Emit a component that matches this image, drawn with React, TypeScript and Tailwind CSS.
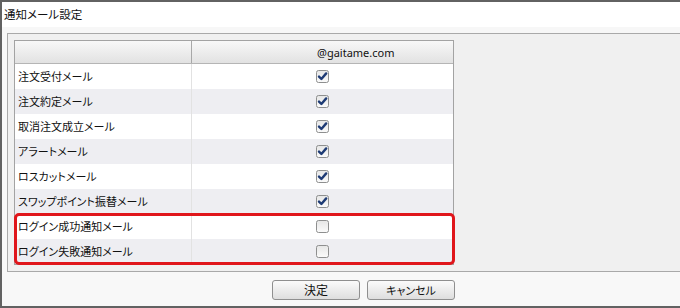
import React from "react";

const rows: { label: string; checked: boolean }[] = [
  { label: "注文受付メール", checked: true },
  { label: "注文約定メール", checked: true },
  { label: "取消注文成立メール", checked: true },
  { label: "アラートメール", checked: true },
  { label: "ロスカットメール", checked: true },
  { label: "スワップポイント振替メール", checked: true },
  { label: "ログイン成功通知メール", checked: false },
  { label: "ログイン失敗通知メール", checked: false },
];

function Check({ checked }: { checked: boolean }) {
  return (
    <svg width="13" height="13" viewBox="0 0 13 13" className="block">
      <defs>
        <linearGradient id="cbg" x1="0" y1="0" x2="0" y2="1">
          <stop offset="0" stopColor="#e6e6e6" />
          <stop offset="1" stopColor="#fbfbfb" />
        </linearGradient>
      </defs>
      <rect x="0.5" y="0.5" width="12" height="12" rx="2" fill="url(#cbg)" stroke="#8e8f8f" />
      {checked && (
        <path d="M3 6.6 L5.4 9 L10.2 3.4" fill="none" stroke="#1e3b75" strokeWidth="2.4" strokeLinecap="round" strokeLinejoin="round" />
      )}
    </svg>
  );
}

export default function App() {
  return (
    <div
      className="w-[680px] h-[308px] bg-[#f8f8f8] border-t-2 border-l-2 border-b-2 border-[#626262] flex flex-col text-[#111] overflow-hidden [font-feature-settings:'palt'] text-[11px]"
      style={{ fontFamily: '"Noto Sans CJK JP", "Noto Sans", sans-serif' }}
    >
      <div className="h-[25px] bg-white pl-[2px] flex items-center leading-none text-[11.5px]">通知メール設定</div>
      <div className="h-[6px] bg-[#f7f7f7]" />
      <div className="ml-[5px] h-[239px] border-t border-l border-b border-[#a9a9a9] bg-[#f0f0f0] pl-[6px] pt-[6px]">
        <div className="relative w-[440px]">
          <div className="border border-[#a3a3a3] bg-white">
            <div className="h-[23px] flex border-b border-[#b5b5b5] bg-gradient-to-b from-[#f8f8f8] to-[#e2e2e2]">
              <div className="w-[177px] border-r border-[#a8a8a8]" />
              <div className="flex-1 flex items-center pl-[125px] text-[11px] leading-none" style={{ fontFamily: '"Noto Sans", "Noto Sans CJK JP", sans-serif' }}>
                @gaitame.com
              </div>
            </div>
            {rows.map((r, i) => (
              <div key={r.label} className={`h-[25px] flex ${i % 2 === 0 ? "bg-white" : "bg-[#eeeef2]"}`}>
                <div className="w-[177px] border-r border-[#e2e2e2] flex items-center pl-[3px] leading-none">{r.label}</div>
                <div className="flex-1 flex items-center justify-center pr-[1px]">
                  <Check checked={r.checked} />
                </div>
              </div>
            ))}
          </div>
          <div className="absolute top-[173px] left-0 w-[441px] h-[52px] border-[3px] border-[#e0161b] rounded-[5px]" />
        </div>
      </div>
      <div className="flex-1 flex items-start pt-[8px] gap-[7px] pl-[270px]">
        <button className="w-[88px] h-[20px] rounded-[3px] border border-[#8f8f8f] bg-gradient-to-b from-[#fbfbfb] to-[#dedede] text-[12px] leading-none flex items-center justify-center">
          決定
        </button>
        <button className="w-[88px] h-[20px] rounded-[3px] border border-[#8f8f8f] bg-gradient-to-b from-[#fbfbfb] to-[#dedede] text-[11px] leading-none flex items-center justify-center">
          キャンセル
        </button>
      </div>
    </div>
  );
}
